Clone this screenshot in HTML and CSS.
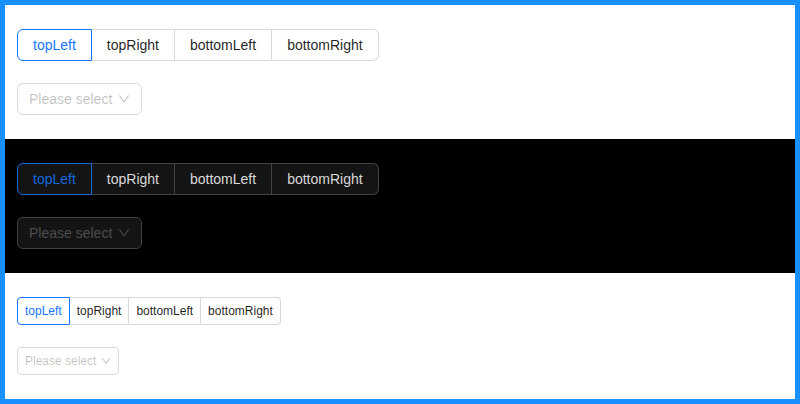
FILE: index.html
```html
<!DOCTYPE html>
<html>
<head>
<meta charset="utf-8">
<link rel="stylesheet" href="styles.css">
</head>
<body>
<div class="frame">
  <section class="block light">
    <div class="radio-group">
      <label class="rb checked">topLeft</label>
      <label class="rb">topRight</label>
      <label class="rb">bottomLeft</label>
      <label class="rb">bottomRight</label>
    </div>
    <div class="select">
      <span class="ph">Please select</span>
      <svg class="arrow" viewBox="64 64 896 896" aria-hidden="true"><path d="M884 256h-75c-5.1 0-9.9 2.5-12.9 6.6L512 654.2 227.9 262.6c-3-4.1-7.8-6.6-12.9-6.6h-75c-6.5 0-10.3 7.4-6.5 12.7l352.6 486.1c12.8 17.6 39 17.6 51.7 0l352.6-486.1c3.9-5.3.1-12.7-6.4-12.7z"/></svg>
    </div>
  </section>
  <section class="block dark">
    <div class="radio-group">
      <label class="rb checked">topLeft</label>
      <label class="rb">topRight</label>
      <label class="rb">bottomLeft</label>
      <label class="rb">bottomRight</label>
    </div>
    <div class="select">
      <span class="ph">Please select</span>
      <svg class="arrow" viewBox="64 64 896 896" aria-hidden="true"><path d="M884 256h-75c-5.1 0-9.9 2.5-12.9 6.6L512 654.2 227.9 262.6c-3-4.1-7.8-6.6-12.9-6.6h-75c-6.5 0-10.3 7.4-6.5 12.7l352.6 486.1c12.8 17.6 39 17.6 51.7 0l352.6-486.1c3.9-5.3.1-12.7-6.4-12.7z"/></svg>
    </div>
  </section>
  <section class="block light small">
    <div class="radio-group">
      <label class="rb checked">topLeft</label>
      <label class="rb">topRight</label>
      <label class="rb">bottomLeft</label>
      <label class="rb">bottomRight</label>
    </div>
    <div class="select">
      <span class="ph">Please select</span>
      <svg class="arrow" viewBox="64 64 896 896" aria-hidden="true"><path d="M884 256h-75c-5.1 0-9.9 2.5-12.9 6.6L512 654.2 227.9 262.6c-3-4.1-7.8-6.6-12.9-6.6h-75c-6.5 0-10.3 7.4-6.5 12.7l352.6 486.1c12.8 17.6 39 17.6 51.7 0l352.6-486.1c3.9-5.3.1-12.7-6.4-12.7z"/></svg>
    </div>
  </section>
</div>
</body>
</html>
```

FILE: styles.css
```css
* { box-sizing: border-box; }
html, body { margin: 0; padding: 0; }
body {
  font-family: "Liberation Sans", Arial, sans-serif;
  font-size: 14px;
  background: #fff;
}
.frame {
  width: 800px;
  height: 404px;
  border: 5px solid #1890ff;
  display: flex;
  flex-direction: column;
}
.block {
  height: 134px;
  padding: 24px 12px;
  display: flex;
  flex-direction: column;
  align-items: flex-start;
  gap: 22px;
}
.block.small { flex: 1; height: auto; }
.light { background: #fff; }
.dark { background: #000; }

.radio-group { display: flex; }
.rb {
  height: 32px;
  line-height: 30px;
  padding: 0 15px;
  border: 1px solid #d9d9d9;
  border-left-width: 0;
  color: rgba(0,0,0,0.88);
  background: #fff;
  white-space: nowrap;
}
.rb:first-child { border-left-width: 1px; border-radius: 6px 0 0 6px; }
.rb:last-child { border-radius: 0 6px 6px 0; }
.light .rb.checked { border-color: #1677ff; color: #1677ff; }

.dark .rb { background: #141414; border-color: #424242; color: rgba(255,255,255,0.85); }
.dark .rb.checked { border-color: #1668dc; color: #1668dc; }

.select {
  height: 32px;
  width: 125px;
  padding: 0 11px;
  border: 1px solid #d9d9d9;
  border-radius: 6px;
  background: #fff;
  display: flex;
  align-items: center;
  justify-content: space-between;
  white-space: nowrap;
  color: rgba(0,0,0,0.25);
}
.ph { white-space: nowrap; }
.arrow { width: 12px; height: 12px; fill: currentColor; flex-shrink: 0; }
.dark .select { background: #141414; border-color: #424242; color: rgba(255,255,255,0.25); }

.small .rb {
  height: 28px;
  line-height: 26px;
  padding: 0 7px;
  font-size: 12px;
}
.small .rb:first-child { border-radius: 4px 0 0 4px; }
.small .rb:last-child { border-radius: 0 4px 4px 0; }
.small .select {
  height: 28px;
  width: 102px;
  padding: 0 7px;
  font-size: 12px;
  border-radius: 4px;
}
.small .arrow { width: 10px; height: 10px; }
```
